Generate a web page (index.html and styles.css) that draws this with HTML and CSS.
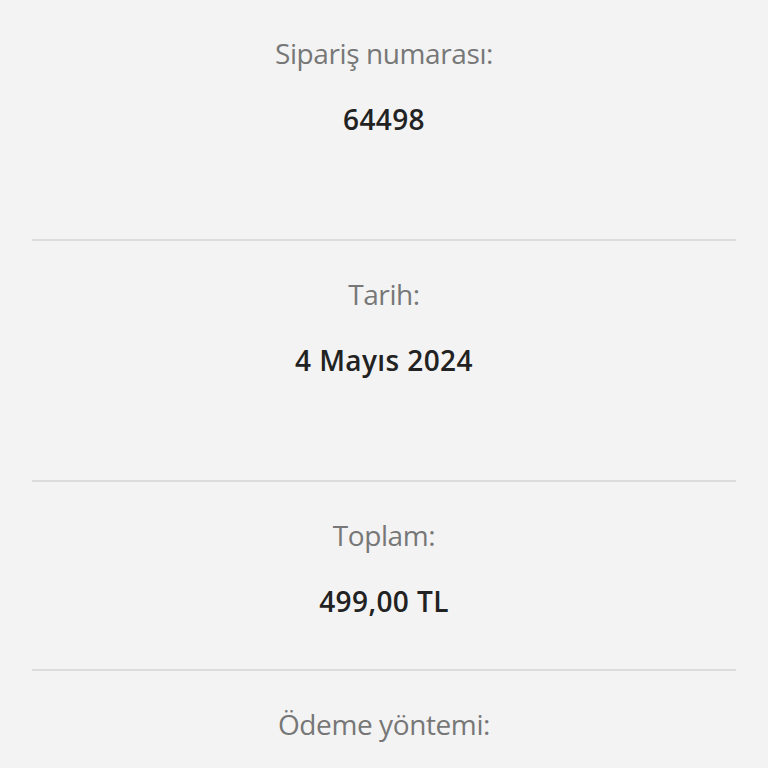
FILE: index.html
```html
<!doctype html>

<html lang="tr">

<head>
  <meta charset="utf-8">

  <title>Sipariş detayları</title>

  <link rel="stylesheet" href="styles.css">
</head>

<body>

  <div class="order">

    <div class="detail detail-tall">
      <div class="label">Sipariş numarası:</div>
      <div class="value">64498</div>
    </div>

    <div class="detail detail-tall">
      <div class="label">Tarih:</div>
      <div class="value">4 Mayıs 2024</div>
    </div>

    <div class="detail">
      <div class="label">Toplam:</div>
      <div class="value">499,00 TL</div>
    </div>

    <div class="detail detail-last">
      <div class="label">Ödeme yöntemi:</div>
    </div>

  </div>

</body>

</html>
```

FILE: styles.css
```css
body {
  margin: 0;
  background-color: #f3f3f3;
  font-family: "Open Sans", "Noto Sans", sans-serif;
}

.order {
  display: flex;
  flex-direction: column;
  margin: 0 32px;
}

.detail {
  display: flex;
  flex-direction: column;
  align-items: center;
  padding: 36px 0 51px;
  border-bottom: 2px solid #dcdcdc;
}

.detail-tall {
  padding-bottom: 103px;
}

.detail-last {
  border-bottom: none;
}

.label {
  font-size: 28px;
  line-height: 34px;
  color: #777777;
  letter-spacing: -0.4px;
}

.value {
  margin-top: 32px;
  font-size: 28px;
  line-height: 34px;
  font-weight: 600;
  color: #222222;
  letter-spacing: 0.4px;
}
```
